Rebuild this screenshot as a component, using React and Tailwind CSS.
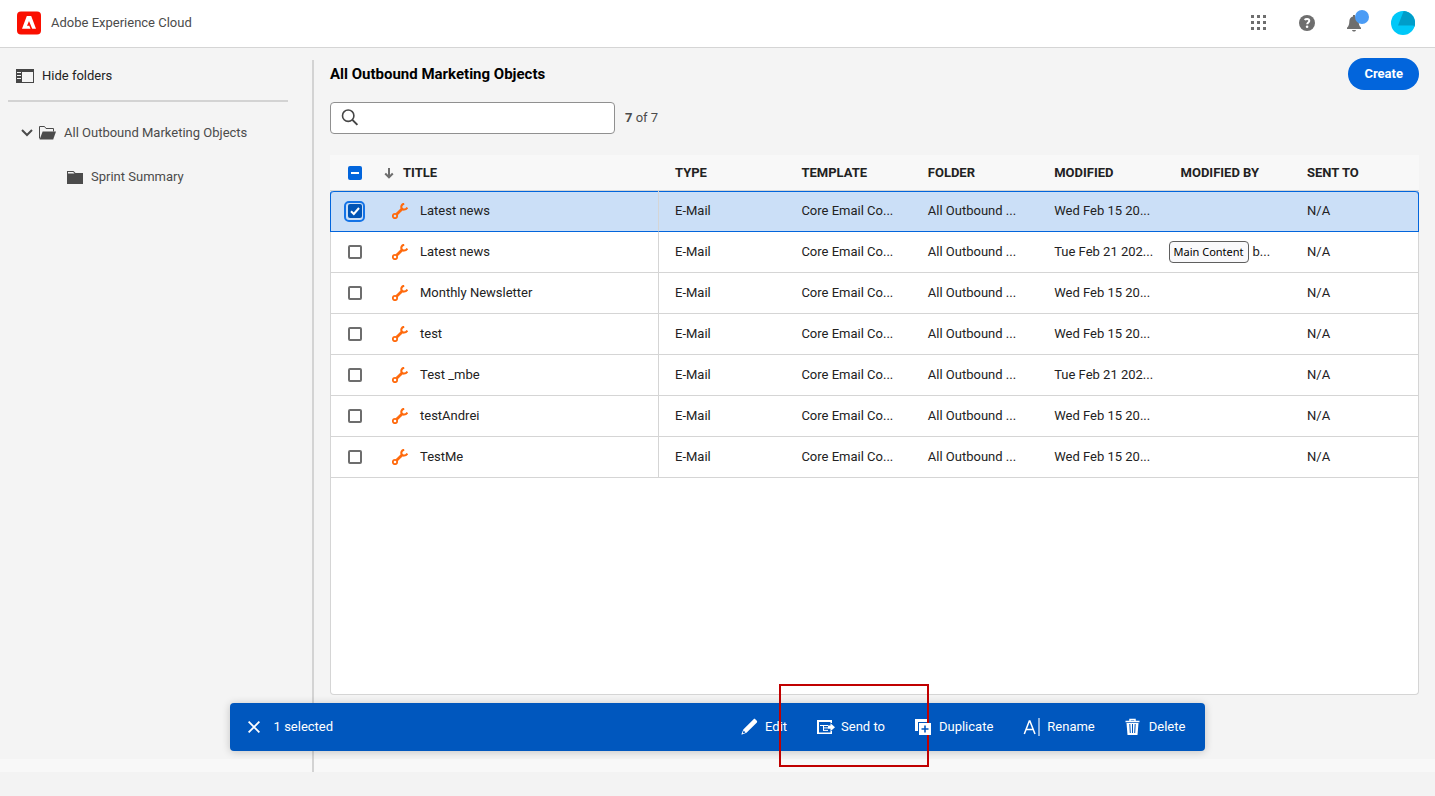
import React, { useState } from "react";

const ROWS = [
  { title: "Latest news", modified: "Wed Feb 15 20..." },
  { title: "Latest news", modified: "Tue Feb 21 202...", by: "b..." },
  { title: "Monthly Newsletter", modified: "Wed Feb 15 20..." },
  { title: "test", modified: "Wed Feb 15 20..." },
  { title: "Test _mbe", modified: "Tue Feb 21 202..." },
  { title: "testAndrei", modified: "Wed Feb 15 20..." },
  { title: "TestMe", modified: "Wed Feb 15 20..." },
];

const COLUMNS = ["TYPE", "TEMPLATE", "FOLDER", "MODIFIED", "MODIFIED BY", "SENT TO"];

function Logo() {
  return (
    <svg viewBox="0 0 24 24" className="size-6" aria-hidden="true">
      <rect y="0.5" width="24" height="23" rx="4" fill="#fa0f00" />
      <path d="M9.800 5h4.400L19 17.800h-3.300c-.3 0-.5-.1-.6-.4l-3-7.200h-.2L10 14.700h2.300l1.200 3.100H5z" fill="#fff" />
    </svg>
  );
}

function AppsIcon() {
  const steps = [0, 6, 12];
  return (
    <svg viewBox="0 0 16 16" className="size-4" fill="#6e6e6e" aria-hidden="true">
      {steps.map((y) => steps.map((x) => <rect key={`${x}-${y}`} x={x} y={y} width="3" height="3" />))}
    </svg>
  );
}

function HelpIcon() {
  return (
    <svg viewBox="0 0 16 16" className="size-4" aria-hidden="true">
      <circle cx="8" cy="8" r="8" fill="#6e6e6e" />
      <path d="M5.600 4.900C6.300 4.100 7.100 3.900 8.100 3.900c1.300 0 2.200.8 2.200 1.900 0 1.600-2.100 1.700-2.100 3.500" fill="none" stroke="#fff" strokeWidth="2" />
      <circle cx="8.100" cy="11.800" r="1.300" fill="#fff" />
    </svg>
  );
}

function BellIcon() {
  return (
    <svg viewBox="0 0 16 18" className="h-[18px] w-4" fill="#6e6e6e" aria-hidden="true">
      <path d="M6 1h2v1.500c2.200.5 3.400 2 3.600 4.300.2 3.600.6 5.400 2.400 7V15H0v-1.200c1.800-1.600 2.200-3.400 2.400-7C2.600 4.500 3.800 3 6 2.500z" />
      <path d="M5 16h4c-.3 1-1 1.500-2 1.500S5.300 17 5 16z" />
    </svg>
  );
}

function Avatar() {
  return (
    <svg viewBox="0 0 24 24" className="size-6" aria-hidden="true">
      <circle cx="12" cy="12" r="12" fill="#00c8f8" />
      <path d="M12.700 0A12 12 0 0 1 23.400 16l-1-1.400H7z" fill="#009dc9" />
    </svg>
  );
}

function PanelIcon() {
  return (
    <svg viewBox="0 0 18 14" className="h-3.5 w-[18px]" aria-hidden="true">
      <path d="M0 0h18v14H0zM6 3v10h11V3z" fill="#464646" fillRule="evenodd" />
      <path d="M1 3.500h4M1 6.500h4M1 9.500h4" stroke="#f4f4f4" />
    </svg>
  );
}

function OpenFolderIcon() {
  return (
    <svg viewBox="0 0 17 14" className="h-3.5 w-[17px]" aria-hidden="true">
      <path d="M.5 12.500v-12h5l1.500 2h7.500v3" fill="none" stroke="#4b4b4b" />
      <path d="M3.600 5.500H17l-2.800 8H.6z" fill="#4b4b4b" />
    </svg>
  );
}

function FolderIcon() {
  return (
    <svg viewBox="0 0 16 13" className="h-[13px] w-4" aria-hidden="true">
      <path d="M0 0h6.500l2 2H16v11H0z" fill="#4b4b4b" />
      <path d="M1 1h5.200L7.500 2.600H1z" fill="#f4f4f4" />
    </svg>
  );
}

function WrenchIcon() {
  return (
    <svg viewBox="0 0 16 16" className="size-4 shrink-0" fill="none" stroke="#ff6a0d" aria-hidden="true">
      <circle cx="3" cy="13" r="2.200" strokeWidth="1.800" />
      <path d="M4.700 11.300L10 6" strokeWidth="2.800" />
      <path d="M12.200 .7C9.700 1.200 8.800 3.300 9.600 5.200S13.700 7.200 15.400 4.500" strokeWidth="2.100" />
    </svg>
  );
}

function Tick({ label, checked, mixed, focused, inset, onChange }) {
  const filled = checked || mixed;
  return (
    <span className={"grid size-[21px] place-items-center rounded-[5px] border-2 " + inset + (focused ? " border-[#1473e6]" : " border-transparent")}>
      <input
        type="checkbox"
        aria-label={label}
        checked={checked}
        onChange={onChange}
        className={
          "col-start-1 row-start-1 size-3.5 appearance-none rounded-[2px] " +
          (filled ? (mixed ? "bg-[#0265dc]" : "bg-[#0054b6]") : "border-2 border-[#6d6d6d] bg-white")
        }
      />
      {filled && (
        <svg viewBox="0 0 14 14" className="pointer-events-none col-start-1 row-start-1 size-3.5" fill="none" stroke="#fff" strokeWidth="2" aria-hidden="true">
          {mixed ? <path d="M3 7h8" /> : <path d="M3 7.200l2.800 2.800L11 4" />}
        </svg>
      )}
    </span>
  );
}

function EditIcon() {
  return (
    <svg viewBox="1 0 18 18" className="size-[18px]" fill="#fff" aria-hidden="true">
      <path d="M13.600 1.200c.6-.5 1.200-.4 1.700.1l1.500 1.500c.5.5.5 1.100.1 1.600L6.500 14.700 2 16.500c-.4.200-.7-.2-.5-.6l1.800-4.500z" />
      <path d="M3.700 12.600l1.800 1.800-2.300.900-.4-.4z" fill="#0057be" />
    </svg>
  );
}

function SendIcon() {
  return (
    <svg viewBox="0 0 18 18" className="size-[18px]" aria-hidden="true">
      <path d="M0 2h15v3H13.500V4H2v10.500h11.500V13H15v3H0z" fill="#fff" />
      <path d="M3 7.500h8M6.500 7.500v5M6 9.900h5M6 12.400h5" fill="none" stroke="#fff" />
      <path d="M11 7.500h2.500V5.200L18 9.200l-4.500 4v-2.400H11z" fill="#fff" />
    </svg>
  );
}

function DuplicateIcon() {
  return (
    <svg viewBox="1 0 18 18" className="size-[18px]" aria-hidden="true">
      <path d="M1 1h12v3H4v9H1z" fill="#fff" />
      <path d="M5 5h12v12H5z" fill="#fff" />
      <path d="M11 7.500v7M7.500 11h7" stroke="#0057be" strokeWidth="1.600" />
    </svg>
  );
}

function RenameIcon() {
  return (
    <svg viewBox="0 0 18 18" className="size-[18px]" fill="none" stroke="#fff" aria-hidden="true">
      <path d="M1.300 16L6.300 3h.6L12 16M3 11.500h7.200" strokeWidth="1.500" />
      <path d="M16 0v18" strokeWidth="2" opacity=".55" />
    </svg>
  );
}

function DeleteIcon() {
  return (
    <svg viewBox="1.500 0 18 18" className="size-[18px]" aria-hidden="true">
      <path d="M6.500 3V1.500h5V3M2 3.500h14" fill="none" stroke="#fff" strokeWidth="1.500" />
      <path d="M3 5h12l-1 12H4z" fill="#fff" />
      <path d="M6.300 6l.5 9M9 6v9M11.700 6l-.5 9" stroke="#0057be" />
    </svg>
  );
}

function BarAction({ icon, label, highlighted }) {
  return (
    <button type="button" className="relative flex items-center gap-1.5">
      {icon}
      {label}
      {highlighted && <span className="pointer-events-none absolute -top-[33px] -right-11 -bottom-[30px] -left-[38px] border-2 border-[#c00000]" />}
    </button>
  );
}

export default function App() {
  const [selected, setSelected] = useState([0]);
  const toggle = (i) => setSelected((s) => (s.includes(i) ? s.filter((n) => n !== i) : [...s, i]));
  const all = selected.length === ROWS.length;

  return (
    <div className="relative flex min-h-screen flex-col bg-[#f4f4f4] font-[Roboto,sans-serif] text-[13px] leading-5 text-[#222222]">
      <header className="flex h-12 items-center justify-between border-b border-[#d5d5d5] bg-white pr-5 pb-0.5 pl-[17px] text-[#4b4b4b]">
        <div className="flex items-center gap-2.5">
          <Logo />
          <span>Adobe Experience Cloud</span>
        </div>
        <div className="flex items-center gap-7">
          <div className="flex items-center gap-8">
            <button type="button" aria-label="Apps"><AppsIcon /></button>
            <button type="button" aria-label="Help"><HelpIcon /></button>
            <button type="button" aria-label="Notifications" className="relative">
              <BellIcon />
              <span className="absolute -top-1 left-2 size-3.5 rounded-full bg-[#4b9cf5]" />
            </button>
          </div>
          <button type="button" aria-label="Account"><Avatar /></button>
        </div>
      </header>

      <div className="flex flex-1">
        <aside className="mt-3 flex w-[314px] shrink-0 flex-col border-r-2 border-[#d3d3d3]">
          <div className="flex-1 pr-6 pl-2">
            <button type="button" className="flex h-8 items-center gap-2 pl-2">
              <PanelIcon />
              Hide folders
            </button>
            <hr className="mt-2 border-t-2 border-[#d3d3d3]" />
            <ul className="mt-[19px] text-[#4b4b4b]">
              <li>
                <a href="#all" className="flex h-6 items-center pl-3">
                  <svg viewBox="0 0 14 10" className="h-2.5 w-3.5" fill="none" stroke="#4b4b4b" strokeWidth="2" aria-hidden="true">
                    <path d="M2 2l5 5 5-5" />
                  </svg>
                  <span className="mr-2 ml-[5px]"><OpenFolderIcon /></span>
                  All Outbound Marketing Objects
                </a>
                <a href="#sprint" className="mt-5 flex h-6 items-center gap-2 pl-[59px]">
                  <FolderIcon />
                  Sprint Summary
                </a>
              </li>
            </ul>
          </div>
          <div className="h-[13px] bg-[#f8f8f8]" />
        </aside>

        <main className="flex min-w-0 flex-1 flex-col pt-2.5">
          <div className="flex flex-1 flex-col px-4 pb-16">
            <div className="flex h-8 items-center justify-between">
              <h1 className="text-[15px] font-bold text-black">All Outbound Marketing Objects</h1>
              <button type="button" className="h-8 rounded-full bg-[#0265dc] px-4 font-bold text-white">Create</button>
            </div>
            <div className="mt-3 flex items-center gap-2.5">
              <label className="grid w-[285px] items-center">
                <input type="search" aria-label="Search" className="col-start-1 row-start-1 h-8 w-full rounded border border-[#909090] bg-white pr-3 pl-9" />
                <svg viewBox="0 0 18 18" className="pointer-events-none col-start-1 row-start-1 ml-[11px] size-[18px]" fill="none" stroke="#464646" aria-hidden="true">
                  <circle cx="7.200" cy="6.700" r="5.700" strokeWidth="1.600" />
                  <path d="M11.400 10.900l5 5" strokeWidth="2" />
                </svg>
              </label>
              <span className="text-[#4b4b4b]"><b>7</b> of 7</span>
            </div>

            <table className="mt-[21px] w-full table-fixed border-separate border-spacing-0 text-left">
              <colgroup>
                <col className="w-12" />
                <col className="w-[281px]" />
                {COLUMNS.map((c) => <col key={c} className={c === "SENT TO" ? "w-32" : ""} />)}
              </colgroup>
              <thead className="bg-[#f8f8f8]">
                <tr className="h-9">
                  <th className="border-b border-[#d5d5d5] p-0">
                    <Tick inset="ml-3.5" label="Select all" checked={all} mixed={!all && selected.length > 0} onChange={() => setSelected(all ? [] : ROWS.map((_, i) => i))} />
                  </th>
                  <th className="border-b border-[#d5d5d5] p-0">
                    <button type="button" className="flex items-center gap-[9px] pl-1.5">
                      <svg viewBox="0 0 10 12" className="h-3 w-2.5" fill="none" stroke="#6e6e6e" strokeWidth="2" aria-hidden="true">
                        <path d="M5 1v9M1.200 6.500L5 10.300l3.800-3.800" />
                      </svg>
                      TITLE
                    </button>
                  </th>
                  {COLUMNS.map((c) => <th key={c} className="border-b border-[#d5d5d5] py-0 pr-0 pl-4 whitespace-nowrap">{c}</th>)}
                </tr>
              </thead>
              <tbody>
                {ROWS.map((r, i) => {
                  const on = selected.includes(i);
                  const cell = "border-b p-0 whitespace-nowrap " + (on ? "border-[#0265dc] bg-[#cbdff7] shadow-[inset_0_1px_0_#0265dc] " : "border-[#d5d5d5] bg-white ");
                  return (
                    <tr key={i} className="h-[41px]">
                      <td className={cell + "border-l " + (i === 0 ? "rounded-tl-[3px]" : "")}>
                        <Tick inset="ml-[13px]" label={`Select ${r.title}`} checked={on} focused={on} onChange={() => toggle(i)} />
                      </td>
                      <td className={cell + "border-r border-r-[#d5d5d5]"}>
                        <div className="flex items-center gap-3 pl-3.5"><WrenchIcon />{r.title}</div>
                      </td>
                      <td className={cell + "pl-4"}>E-Mail</td>
                      <td className={cell + "pl-4"}>Core Email Co...</td>
                      <td className={cell + "pl-4"}>All Outbound ...</td>
                      <td className={cell + "pl-4"}>{r.modified}</td>
                      <td className={cell + "pl-4"}>
                        {r.by && (
                          <div className="relative pl-[72px]">
                            {r.by}
                            <span role="tooltip" className="absolute -top-px -left-3 flex h-[22px] items-center rounded border border-[#5f5f5f] bg-[#f9f9fb] px-1 font-['Noto_Sans',sans-serif] text-[11px] text-black">Main Content</span>
                          </div>
                        )}
                      </td>
                      <td className={cell + "border-r pl-4 " + (i === 0 ? "rounded-tr-[3px]" : "")}>N/A</td>
                    </tr>
                  );
                })}
              </tbody>
            </table>
            <div className="flex-1 rounded-b border border-t-0 border-[#d5d5d5] bg-white" />
          </div>
          <div className="h-[13px] bg-[#f8f8f8]" />
        </main>
      </div>
      <footer className="h-6 bg-[#f3f3f3]" />

      <div className="absolute inset-x-0 bottom-[45px] mx-auto flex h-12 w-[68%] items-center justify-between rounded bg-[#0057be] pr-5 pl-[18px] text-white shadow-[0_1px_8px_rgba(0,0,0,0.2)]">
        <div className="flex items-center gap-3.5">
          <button type="button" aria-label="Clear selection">
            <svg viewBox="0 0 12 12" className="size-3" fill="none" stroke="#fff" strokeWidth="1.800" aria-hidden="true">
              <path d="M.6 .6l10.800 10.800M11.400 .6L.6 11.400" />
            </svg>
          </button>
          <span>{selected.length} selected</span>
        </div>
        <div className="flex items-center gap-[30px]">
          <BarAction icon={<EditIcon />} label="Edit" />
          <BarAction icon={<SendIcon />} label="Send to" highlighted />
          <BarAction icon={<DuplicateIcon />} label="Duplicate" />
          <BarAction icon={<RenameIcon />} label="Rename" />
          <BarAction icon={<DeleteIcon />} label="Delete" />
        </div>
      </div>
    </div>
  );
}
